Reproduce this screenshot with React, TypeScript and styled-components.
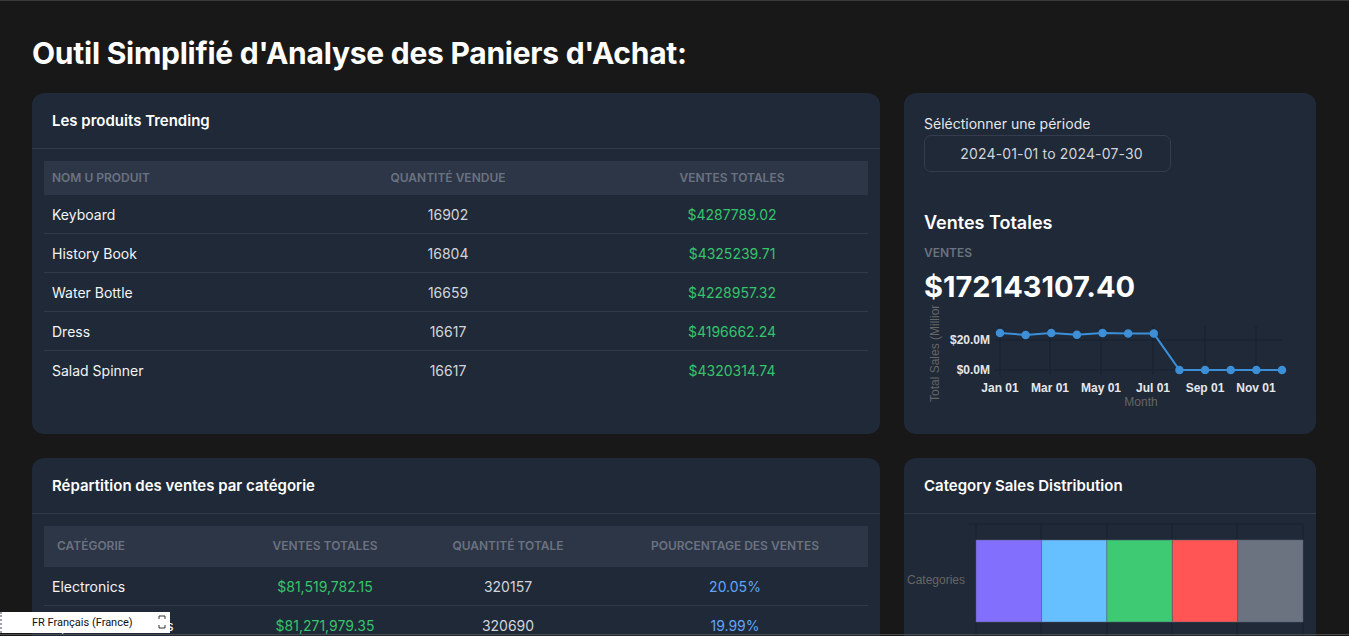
import React from "react";
import styled, { createGlobalStyle } from "styled-components";

const GlobalStyle = createGlobalStyle`
  * { box-sizing: border-box; }
  html, body {
    margin: 0;
    padding: 0;
    background: #181818;
    overflow: hidden;
  }
  html { border-top: 1px solid #3a3a3a; }
  body {
    font-family: Inter, "Noto Sans", sans-serif;
    color: #e5e7eb;
  }
`;

const Page = styled.main`
  padding: 34px 33px 40px 32px;
`;

const Title = styled.h1`
  margin: 0 0 22px;
  font-size: 30px;
  line-height: 36px;
  font-weight: 700;
  color: #ffffff;
  letter-spacing: -0.25px;
`;

const Grid = styled.div`
  display: grid;
  grid-template-columns: 848px 412px;
  grid-auto-rows: minmax(341px, auto);
  gap: 24px;
`;

const Card = styled.section`
  background: #1f2937;
  border-radius: 12px;
  overflow: hidden;
`;

const CardHeader = styled.header`
  padding: 16px 20px 15px;
  border-bottom: 1px solid #313b4b;
  font-size: 15px;
  line-height: 24px;
  font-weight: 600;
  color: #ffffff;
`;

const TableWrap = styled.div`
  padding: 12px;
`;

const Table = styled.table`
  width: 100%;
  border-collapse: collapse;
  table-layout: fixed;
`;

const Th = styled.th<{ $align?: string; $pad: string; $w: number }>`
  width: ${(p) => p.$w}px;
  background: #2d3646;
  color: #6b7280;
  font-size: 12px;
  line-height: 16px;
  font-weight: 600;
  text-transform: uppercase;
  text-align: ${(p) => p.$align || "left"};
  padding: ${(p) => p.$pad};
`;

const Tr = styled.tr`
  border-bottom: 1px solid #313b4b;
  &:last-child { border-bottom: none; }
`;

const Td = styled.td<{ $align?: string; $tone?: "name" | "num" | "green" | "blue" }>`
  padding: 10px 8px 8px 8px;
  font-size: 14px;
  line-height: 20px;
  text-align: ${(p) => p.$align || "left"};
  color: ${(p) =>
    p.$tone === "green"
      ? "#36c46c"
      : p.$tone === "blue"
      ? "#60a5fa"
      : p.$tone === "num"
      ? "#d1d5db"
      : "#f3f4f6"};
`;

const SideCard = styled(Card)`
  padding: 21px 20px 22px;
  display: flex;
  flex-direction: column;
`;

const FieldLabel = styled.label`
  font-size: 14px;
  line-height: 20px;
  color: #e5e7eb;
`;

const DateInput = styled.div`
  margin-top: 1px;
  width: 247px;
  height: 37px;
  padding-left: 8px;
  border: 1px solid #333d4d;
  border-radius: 7px;
  display: flex;
  align-items: center;
  justify-content: center;
  font-size: 14px;
  letter-spacing: 0.15px;
  color: #d1d5db;
`;

const StatTitle = styled.h2`
  margin: 37px 0 0;
  font-size: 18px;
  line-height: 28px;
  font-weight: 600;
  color: #ffffff;
`;

const StatLabel = styled.div`
  margin-top: 8px;
  font-size: 12px;
  line-height: 16px;
  font-weight: 600;
  color: #6b7280;
`;

const StatValue = styled.div`
  margin-top: 8px;
  font-size: 29px;
  line-height: 36px;
  font-weight: 700;
  color: #ffffff;
`;

const ChartSvg = styled.svg`
  display: block;
  font-family: "Liberation Sans", Arial, sans-serif;
`;

const BarCard = styled(Card)`
  display: flex;
  flex-direction: column;
`;

const Overlay = styled.div`
  position: fixed;
  left: 0;
  bottom: 3px;
  width: 170px;
  height: 21px;
  background: #ffffff;
  border-left: 2px dotted #9ca3af;
  display: flex;
  align-items: center;
  padding-left: 30px;
  font-family: Roboto, "Liberation Sans", Arial, sans-serif;
  font-size: 11px;
  color: #111111;
`;

const OverlayIcon = styled.svg`
  position: absolute;
  right: 4px;
  top: 3px;
`;

const BottomEdge = styled.div`
  position: fixed;
  left: 0;
  right: 0;
  bottom: 1px;
  height: 1px;
  background: #4a4a4a;
`;

const products = [
  ["Keyboard", "16902", "$4287789.02"],
  ["History Book", "16804", "$4325239.71"],
  ["Water Bottle", "16659", "$4228957.32"],
  ["Dress", "16617", "$4196662.24"],
  ["Salad Spinner", "16617", "$4320314.74"],
];

const categories = [
  ["Electronics", "$81,519,782.15", "320157", "20.05%"],
  ["Sports & Outdoors", "$81,271,979.35", "320690", "19.99%"],
  ["Clothing", "$81,348,112.60", "320412", "20.01%"],
  ["Home & Kitchen", "$81,230,455.02", "319876", "19.98%"],
  ["Books", "$81,190,604.33", "319544", "19.97%"],
];

const monthly = [24.6, 23.4, 24.7, 23.5, 24.6, 24.4, 24.3, 0, 0, 0, 0, 0];

function SalesChart() {
  const x0 = 76;
  const step = 282 / 11;
  const y = (v: number) => 66 - v * 1.5;
  const pts = monthly.map((v, i) => [x0 + i * step, y(v)]);
  const ticks = [
    [76, "Jan 01"],
    [126, "Mar 01"],
    [177, "May 01"],
    [229, "Jul 01"],
    [281, "Sep 01"],
    [332, "Nov 01"],
  ] as const;
  const grid = "#192130";
  return (
    <ChartSvg width={372} height={107} viewBox="0 1 372 107">
      {ticks.map(([tx]) => (
        <line key={tx} x1={tx} x2={tx} y1={22} y2={71} stroke={grid} strokeWidth={1} />
      ))}
      {[36, 66].map((gy) => (
        <line key={gy} x1={71} x2={358} y1={gy} y2={gy} stroke={grid} strokeWidth={1} />
      ))}
      <text x={66} y={40} textAnchor="end" fontSize={12} fontWeight={700} fill="#e5e7eb">
        $20.0M
      </text>
      <text x={66} y={70} textAnchor="end" fontSize={12} fontWeight={700} fill="#e5e7eb">
        $0.0M
      </text>
      {ticks.map(([tx, label]) => (
        <text key={label} x={tx} y={88} textAnchor="middle" fontSize={12} fontWeight={700} fill="#e5e7eb">
          {label}
        </text>
      ))}
      <text x={217} y={102} textAnchor="middle" fontSize={12} fill="#666666">
        Month
      </text>
      <text
        x={0}
        y={0}
        fontSize={12}
        fill="#666666"
        transform="translate(15 98) rotate(-90)"
      >
        Total Sales (Millions)
      </text>
      <polyline
        points={pts.map((p) => p.join(",")).join(" ")}
        fill="none"
        stroke="#3b8fd8"
        strokeWidth={2}
      />
      {pts.map(([px, py], i) => (
        <circle key={i} cx={px} cy={py} r={3.5} fill="#3f8fd6" stroke="#3b8fd8" strokeWidth={1.5} />
      ))}
    </ChartSvg>
  );
}

const shares = [20.05, 19.99, 20.01, 19.98, 19.97];
const barColors = ["#836ffe", "#66bfff", "#3ec973", "#ff5555", "#6b7280"];

function CategoryChart() {
  const left = 72;
  const width = 327;
  let acc = left;
  const grid = "#192130";
  return (
    <ChartSvg width={412} height={200} viewBox="0 0 412 200">
      {[72, 137, 203, 268, 333, 399].map((gx) => (
        <line key={gx} x1={gx} x2={gx} y1={10} y2={200} stroke={grid} strokeWidth={1} />
      ))}
      <line x1={64} x2={399} y1={10} y2={10} stroke={grid} strokeWidth={1} />
      {shares.map((s, i) => {
        const w = (width * s) / 100;
        const r = (
          <rect
            key={i}
            x={acc}
            y={26}
            width={w}
            height={82}
            fill={barColors[i]}
            stroke="#55607080"
            strokeWidth={1}
          />
        );
        acc += w;
        return r;
      })}
      <text x={32} y={70} textAnchor="middle" fontSize={12} fill="#666666">
        Categories
      </text>
    </ChartSvg>
  );
}

export default function App() {
  return (
    <>
      <GlobalStyle />
      <Page>
        <Title>Outil Simplifié d'Analyse des Paniers d'Achat:</Title>
        <Grid>
          <Card>
            <CardHeader>Les produits Trending</CardHeader>
            <TableWrap>
              <Table>
                <thead>
                  <tr>
                    <Th $w={256} $pad="9px 8px 9px">Nom u produit</Th>
                    <Th $w={296} $pad="9px 8px 9px" $align="center">Quantité vendue</Th>
                    <Th $w={272} $pad="9px 8px 9px" $align="center">Ventes totales</Th>
                  </tr>
                </thead>
                <tbody>
                  {products.map(([name, qty, total]) => (
                    <Tr key={name}>
                      <Td>{name}</Td>
                      <Td $align="center" $tone="num">{qty}</Td>
                      <Td $align="center" $tone="green">{total}</Td>
                    </Tr>
                  ))}
                </tbody>
              </Table>
            </TableWrap>
          </Card>

          <SideCard>
            <FieldLabel>Séléctionner une période</FieldLabel>
            <DateInput>2024-01-01 to 2024-07-30</DateInput>
            <StatTitle>Ventes Totales</StatTitle>
            <StatLabel>VENTES</StatLabel>
            <StatValue>$172143107.40</StatValue>
            <SalesChart />
          </SideCard>

          <Card>
            <CardHeader>Répartition des ventes par catégorie</CardHeader>
            <TableWrap>
              <Table>
                <thead>
                  <tr>
                    <Th $w={192} $pad="12px 13px 13px">Catégorie</Th>
                    <Th $w={178} $pad="12px 8px 13px" $align="center">Ventes totales</Th>
                    <Th $w={188} $pad="12px 8px 13px" $align="center">Quantité totale</Th>
                    <Th $w={266} $pad="12px 8px 13px" $align="center">Pourcentage des ventes</Th>
                  </tr>
                </thead>
                <tbody>
                  {categories.map(([name, total, qty, pct]) => (
                    <Tr key={name}>
                      <Td>{name}</Td>
                      <Td $align="center" $tone="green">{total}</Td>
                      <Td $align="center" $tone="num">{qty}</Td>
                      <Td $align="center" $tone="blue">{pct}</Td>
                    </Tr>
                  ))}
                </tbody>
              </Table>
            </TableWrap>
          </Card>

          <BarCard>
            <CardHeader>Category Sales Distribution</CardHeader>
            <CategoryChart />
          </BarCard>
        </Grid>
      </Page>
      <BottomEdge />
      <Overlay>
        FR Français (France)
        <OverlayIcon width="8" height="14" viewBox="0 0 8 14">
          <path d="M1 4 V1 H7 V4 M1 10 V13 H7 V10" fill="none" stroke="#333" strokeWidth="1" />
        </OverlayIcon>
      </Overlay>
    </>
  );
}
